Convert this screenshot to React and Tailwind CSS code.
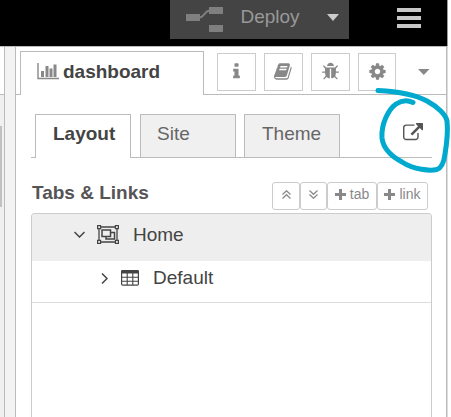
import React from 'react';

const PATHS = {
  info: 'M1216 1344v128q0 26-19 45t-45 19h-512q-26 0-45-19t-19-45v-128q0-26 19-45t45-19h64v-384h-64q-26 0-45-19t-19-45v-128q0-26 19-45t45-19h384q26 0 45 19t19 45v576h64q26 0 45 19t19 45zm-128-1152v192q0 26-19 45t-45 19h-256q-26 0-45-19t-19-45v-192q0-26 19-45t45-19h256q26 0 45 19t19 45z',
  book: 'M1639 478q40 57 18 129l-275 906q-19 64-76.5 107.5t-122.5 43.5h-923q-77 0-148.5-53.5t-99.5-131.5q-24-67-2-127 0-4 3-27t4-37q1-8-3-21.5t-3-19.5q2-11 8-21t16.5-23.5 16.5-23.5q23-38 45-91.5t30-91.5q3-10 .5-30t-.5-28q3-11 17-28t17-23q21-36 42-92t25-90q1-9-2.5-32t.5-28q4-13 22-30.5t22-22.5q19-26 42.5-84.5t27.5-96.5q1-8-3-25.5t-2-26.5q2-8 9-18t18-23 17-21q8-12 16.5-30.5t15-35 16-36 19.5-32 26.5-23.5 36-11.5 47.5 5.5l-1 3q38-9 51-9h761q74 0 114 56t18 130l-274 906q-36 119-71.5 153.5t-128.5 34.5h-869q-27 0-38 15-11 16-1 43 24 70 144 70h923q29 0 56-15.5t35-41.5l300-987q7-22 5-57 38 15 59 43zm-1064 2q-4 13 2 22.5t20 9.5h608q13 0 25.5-9.5t16.5-22.5l21-64q4-13-2-22.5t-20-9.5h-608q-13 0-25.5 9.5t-16.5 22.5zm-83 256q-4 13 2 22.5t20 9.5h608q13 0 25.5-9.5t16.5-22.5l21-64q4-13-2-22.5t-20-9.5h-608q-13 0-25.5 9.5t-16.5 22.5z',
  bug: 'M1696 960q0 26-19 45t-45 19h-224q0 171-67 290l208 209q19 19 19 45t-19 45q-18 19-45 19t-45-19l-198-197q-5 5-15 13t-42 28.5-65 36.5-82 29-97 13v-896h-128v896q-51 0-101.5-13.5t-87-33-66-39-43.5-32.5l-15-14-183 207q-20 21-48 21-24 0-43-16-19-18-20.5-44.5t15.5-46.5l202-227q-58-114-58-274h-224q-26 0-45-19t-19-45 19-45 45-19h224v-294l-173-173q-19-19-19-45t19-45 45-19 45 19l173 173h844l173-173q19-19 45-19t45 19 19 45-19 45l-173 173v294h224q26 0 45 19t19 45zm-480-576h-640q0-133 93.5-226.5t226.5-93.5 226.5 93.5 93.5 226.5z',
  cog: 'M1152 896q0-106-75-181t-181-75-181 75-75 181 75 181 181 75 181-75 75-181zm512-109v222q0 12-8 23t-20 13l-185 28q-19 54-39 91 35 50 107 138 10 12 10 25t-9 23q-27 37-99 108t-94 71q-12 0-26-9l-138-108q-44 23-91 38-16 136-29 186-7 28-36 28h-222q-14 0-24.5-8.5t-11.5-21.5l-28-184q-49-16-90-37l-141 107q-10 9-25 9-14 0-25-11-126-114-165-168-7-10-7-23 0-12 8-23 15-21 51-66.5t54-70.5q-27-50-41-99l-183-27q-13-2-21-12.5t-8-23.5v-222q0-12 8-23t19-13l186-28q14-46 39-92-40-57-107-138-10-12-10-24 0-10 9-23 26-36 98.5-107.5t94.5-71.5q13 0 26 10l138 107q44-23 91-38 16-136 29-186 7-28 36-28h222q14 0 24.5 8.5t11.5 21.5l28 184q49 16 90 37l142-107q9-9 24-9 13 0 25 10 129 119 165 170 7 8 7 22 0 12-8 23-15 21-51 66.5t-54 70.5q26 50 41 98l183 28q13 2 21 12.5t8 23.5z',
  external: 'M1408 928v320q0 119-84.5 203.5t-203.5 84.5h-832q-119 0-203.5-84.5t-84.5-203.5v-832q0-119 84.5-203.5t203.5-84.5h704q14 0 23 9t9 23v64q0 14-9 23t-23 9h-704q-66 0-113 47t-47 113v832q0 66 47 113t113 47h832q66 0 113-47t47-113v-320q0-14 9-23t23-9h64q14 0 23 9t9 23zm384-864v512q0 26-19 45t-45 19-45-19l-176-176-652 652q-10 10-23 10t-23-10l-114-114q-10-10-10-23t10-23l652-652-176-176q-19-19-19-45t19-45 45-19h512q26 0 45 19t19 45z',
};

function Glyph({ name, className }) {
  return (
    <svg viewBox="0 0 1792 1792" fill="currentColor" className={className}>
      <path d={PATHS[name]} />
    </svg>
  );
}

function Header() {
  return (
    <header className="flex h-[46px] w-[448px] shrink-0 border-r border-[#999] bg-black">
      <button className="ml-[170px] flex h-[39px] w-[179px] shrink-0 items-start bg-[#444]">
        <svg width="37" height="25" viewBox="0 0 37 25" className="ml-4 mt-[7px]">
          <path d="M13 10.5c6 0 5-7 11-7" fill="none" stroke="#7f7f7f" strokeWidth="2" />
          <path d="M0 7h14v7H0zM23 0h14v7H23zM23 18h14v7H23z" fill="#7f7f7f" />
        </svg>
        <span className="ml-[17px] mt-[6px] w-[60px] leading-[22px] text-[#999]">Deploy</span>
        <svg width="12" height="7" viewBox="0 0 12 7" className="ml-[27px] mt-[14px]">
          <path d="M0 0h12L6 7z" fill="#ccc" />
        </svg>
      </button>
      <div className="ml-12 mt-2 flex w-6 flex-col gap-1">
        <div className="h-1 bg-[#c7c7c7]" />
        <div className="h-1 bg-[#c7c7c7]" />
        <div className="h-1 bg-[#c7c7c7]" />
      </div>
    </header>
  );
}

function Gutter() {
  return (
    <div className="flex w-4 shrink-0">
      <div className="flex w-1 flex-col bg-[#f0f0f0]">
        <div className="h-[48px] border-b border-[#bbb] bg-white" />
        <div className="mt-[31px] h-[81px] w-[2px] bg-[#c1c1c1]" />
      </div>
      <div className="w-3 border-x border-[#bbb] bg-[#f3f3f3]" />
    </div>
  );
}

function IconButton({ name, className = 'w-[39px]' }) {
  return (
    <button className={`mt-[6px] flex h-[38px] shrink-0 items-center justify-center border border-[#ccc] pb-px text-[#888] ${className}`}>
      <Glyph name={name} className="size-[19px]" />
    </button>
  );
}

function SidebarTabs() {
  return (
    <div className="flex h-[48px]">
      <div className="w-1 border-b border-[#bbb]" />
      <div className="mt-1 flex w-[184px] border-x border-t border-[#bbb] font-bold text-[#444]">
        <svg width="22" height="17" viewBox="0 0 22 17" className="ml-4 mt-[11px] text-[#888]">
          <path d="M1 0v15.5h21" fill="none" stroke="currentColor" strokeWidth="1.4" />
          <path d="M4 8h3v6H4zM8.500 3h3v11h-3zM12.500 5.500h3V14h-3zM16.500 1.500h3V14h-3z" fill="currentColor" />
        </svg>
        <span className="ml-1 mt-[9px] leading-[22px]">dashboard</span>
      </div>
      <div className="flex flex-1 border-b border-[#bbb] pl-[13px]">
        <IconButton name="info" />
        <IconButton name="book" className="ml-2 w-[39px]" />
        <IconButton name="bug" className="ml-2 w-[39px]" />
        <IconButton name="cog" className="ml-2 w-[38px]" />
        <svg width="12" height="6" viewBox="0 0 12 6" className="ml-[22px] mt-[22px]">
          <path d="M0 0h11.500L5.750 6z" fill="#888" />
        </svg>
      </div>
    </div>
  );
}

function SectionTabs() {
  return (
    <div className="ml-[15px] mt-[19px] flex h-11 w-[401px]">
      <div className="w-1 border-b border-[#bbb]" />
      <div className="w-24 border-x border-t border-[#bbb] pl-[17px] pt-[8px] font-bold leading-[22px] text-[#444]">Layout</div>
      <div className="w-[9px] border-b border-[#bbb]" />
      <div className="w-24 border border-[#bbb] bg-[#f0f0f0] pl-4 pt-[8px] leading-[22px] text-[#666]">Site</div>
      <div className="w-2 border-b border-[#bbb]" />
      <div className="w-24 border border-[#bbb] bg-[#f0f0f0] pl-[17px] pt-[8px] leading-[22px] text-[#666]">Theme</div>
      <div className="flex-1 border-b border-[#bbb] pl-[63px] pt-[9px]">
        <Glyph name="external" className="size-[20px] text-[#555]" />
      </div>
    </div>
  );
}

function Plus() {
  return (
    <svg width="11" height="11" viewBox="0 0 11 11" className="mr-1 shrink-0">
      <path d="M4 0h3v4h4v3H7v4H4V7H0V4h4z" fill="currentColor" />
    </svg>
  );
}

function Chevrons({ down }) {
  return (
    <svg width="9" height="9" viewBox="0 0 9 9" className={down ? 'rotate-180' : ''}>
      <path d="M.5 4.500 4.500 .700l4 3.800M.5 8.500l4-3.800 4 3.800" fill="none" stroke="currentColor" strokeWidth="1.200" />
    </svg>
  );
}

function Toolbar() {
  const base = 'flex h-7 items-center justify-center rounded-[3px] border border-[#ccc] pb-[3px] text-[14px] text-[#888]';
  return (
    <div className="ml-4 mt-6 flex w-[396px] justify-between">
      <h2 className="font-bold leading-[22px] text-[#555]">Tabs &amp; Links</h2>
      <div className="flex">
        <button className={`${base} w-7`}><Chevrons /></button>
        <button className={`${base} w-[27px]`}><Chevrons down /></button>
        <button className={`${base} w-[50px]`}><Plus />tab</button>
        <button className={`${base} w-[51px]`}><Plus />link</button>
      </div>
    </div>
  );
}

function GroupIcon() {
  return (
    <svg width="22" height="19" viewBox="0 0 22 19" fill="none" stroke="currentColor" className="ml-3">
      <path d="M2 4v11M20 4v11M4 2h14M4 17h14" strokeWidth="1.300" />
      <path d="M.6.600h3v3h-3zM18.400.600h3v3h-3zM.6 15.400h3v3h-3zM18.400 15.400h3v3h-3z" strokeWidth="1.200" />
      <path d="M5 5h8.500v6.500H5zM14 7.500h3.500V14H9v-2" strokeWidth="1.500" />
    </svg>
  );
}

function TableIcon() {
  return (
    <svg width="18" height="16" viewBox="0 0 18 16" className="ml-[13px]">
      <rect x=".6" y=".6" width="16.800" height="14.600" rx="1.200" fill="none" stroke="currentColor" strokeWidth="1.200" />
      <path d="M0 1.500Q0 0 1.500 0h15Q18 0 18 1.500V3.500H0z" fill="currentColor" />
      <path d="M1 7.300h16M1 11.200h16M6.200 3v12M11.800 3v12" stroke="currentColor" strokeWidth="1.100" />
    </svg>
  );
}

function TreeList() {
  return (
    <div className="ml-[15px] mt-[3px] w-[401px] flex-1 overflow-hidden rounded-t-[4px] border-x border-t border-[#ccc] text-[#444]">
      <div className="flex h-[47px] items-center bg-[#eee] pb-[6px]">
        <svg width="11" height="7" viewBox="0 0 11 7" className="ml-[42px]">
          <path d="m.5 1 5 5 5-5" fill="none" stroke="currentColor" strokeWidth="1.500" />
        </svg>
        <GroupIcon />
        <span className="ml-[14px] leading-[22px]">Home</span>
      </div>
      <div className="flex h-[42px] items-center border-b border-[#ddd] pb-[7px]">
        <svg width="7" height="11" viewBox="0 0 7 11" className="ml-[69px]">
          <path d="m1 .5 5 5-5 5" fill="none" stroke="currentColor" strokeWidth="1.500" />
        </svg>
        <TableIcon />
        <span className="ml-[14px] leading-[22px]">Default</span>
      </div>
    </div>
  );
}

export default function App() {
  return (
    <div className="relative flex h-[417px] w-[451px] flex-col overflow-hidden bg-white font-['Liberation_Sans',Arial,sans-serif] text-[19px]">
      <Header />
      <div className="flex w-[448px] flex-1 border-t border-r border-t-[#bbb] border-r-[#ddd]">
        <Gutter />
        <aside className="flex flex-1 flex-col border-r border-[#bbb]">
          <SidebarTabs />
          <SectionTabs />
          <Toolbar />
          <TreeList />
        </aside>
      </div>
      <svg width="451" height="417" viewBox="0 0 451 417" className="pointer-events-none absolute inset-0">
        <path
          d="M378 90.500C397 91.500 414 94 427 101C438 107 446 115 447 121C448 130 447 142 445 154C444 162 441 168 437 169.500C430 171 414 170 402 162C389 155 383 147 382 138C381 123 389 109 396 104C402 100 408 100 413 102.500"
          fill="none"
          stroke="#00aacf"
          strokeWidth="5"
          strokeLinecap="round"
          strokeLinejoin="round"
        />
      </svg>
    </div>
  );
}
